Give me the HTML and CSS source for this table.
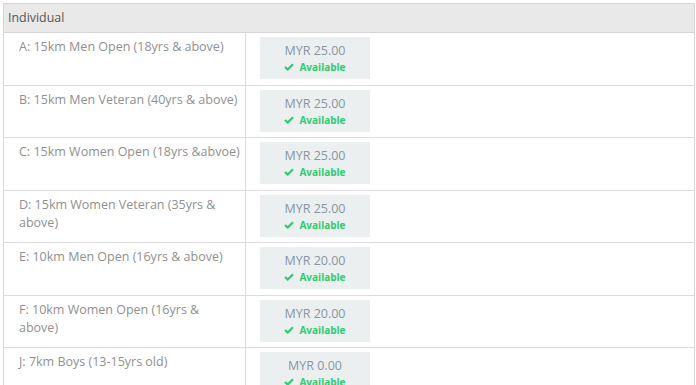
FILE: index.html
```html
<!DOCTYPE html>
<html>
<head>
<meta charset="utf-8">
<link rel="stylesheet" href="styles.css">
</head>
<body>
<div class="panel">
  <div class="panel-head">Individual</div>
  <table class="cats">
    <tbody>
      <tr><td class="name">A: 15km Men Open (18yrs &amp; above)</td><td class="price"><div class="pbox"><div class="amt">MYR 25.00</div><div class="avail"><svg viewBox="0 0 12 10" class="chk"><path d="M1 5 L4.4 8.2 L11 1.6" /></svg>Available</div></div></td></tr>
      <tr><td class="name">B: 15km Men Veteran (40yrs &amp; above)</td><td class="price"><div class="pbox"><div class="amt">MYR 25.00</div><div class="avail"><svg viewBox="0 0 12 10" class="chk"><path d="M1 5 L4.4 8.2 L11 1.6" /></svg>Available</div></div></td></tr>
      <tr><td class="name">C: 15km Women Open (18yrs &amp;abvoe)</td><td class="price"><div class="pbox"><div class="amt">MYR 25.00</div><div class="avail"><svg viewBox="0 0 12 10" class="chk"><path d="M1 5 L4.4 8.2 L11 1.6" /></svg>Available</div></div></td></tr>
      <tr><td class="name">D: 15km Women Veteran (35yrs &amp; above)</td><td class="price"><div class="pbox"><div class="amt">MYR 25.00</div><div class="avail"><svg viewBox="0 0 12 10" class="chk"><path d="M1 5 L4.4 8.2 L11 1.6" /></svg>Available</div></div></td></tr>
      <tr><td class="name">E: 10km Men Open (16yrs &amp; above)</td><td class="price"><div class="pbox"><div class="amt">MYR 20.00</div><div class="avail"><svg viewBox="0 0 12 10" class="chk"><path d="M1 5 L4.4 8.2 L11 1.6" /></svg>Available</div></div></td></tr>
      <tr><td class="name">F: 10km Women Open (16yrs &amp; above)</td><td class="price"><div class="pbox"><div class="amt">MYR 20.00</div><div class="avail"><svg viewBox="0 0 12 10" class="chk"><path d="M1 5 L4.4 8.2 L11 1.6" /></svg>Available</div></div></td></tr>
      <tr><td class="name">J: 7km Boys (13-15yrs old)</td><td class="price"><div class="pbox"><div class="amt">MYR 0.00</div><div class="avail"><svg viewBox="0 0 12 10" class="chk"><path d="M1 5 L4.4 8.2 L11 1.6" /></svg>Available</div></div></td></tr>
    </tbody>
  </table>
</div>
</body>
</html>
```

FILE: styles.css
```css
html, body {
  margin: 0;
  padding: 0;
  background: #ffffff;
}
body {
  padding: 3px 1px 0 3px;
  font-family: "Open Sans", "Noto Sans", sans-serif;
  overflow: hidden;
}
.panel {
  border: 1px solid #d6d6d6;
  border-bottom: none;
  width: 690px;
}
.panel-head {
  background: #e9e9e9;
  color: #555555;
  font-size: 12.4px;
  line-height: 28px;
  height: 28px;
  padding-left: 4px;
  border-bottom: 1px solid #d6d6d6;
}
.cats {
  width: 100%;
  border-collapse: collapse;
  table-layout: fixed;
}
.cats td {
  border-bottom: 1px solid #dcdcdc;
  vertical-align: top;
  padding: 4px 0 5.5px 0;
}
.cats td.name {
  width: 221px;
  padding: 5px 5px 5px 15px;
  border-right: 1px solid #dcdcdc;
  color: #8f8f8f;
  font-size: 12.5px;
  line-height: 18px;
}
.cats td.price {
  padding-left: 14px;
}
.pbox {
  width: 110px;
  height: 42px;
  background: #ecefef;
  text-align: center;
  box-sizing: border-box;
  padding-top: 5px;
}
.amt {
  color: #8796a3;
  font-size: 12.5px;
  line-height: 18px;
}
.avail {
  color: #2ecc71;
  font-size: 10px;
  font-weight: 700;
  line-height: 14px;
  display: flex;
  justify-content: center;
  align-items: center;
  gap: 5px;
}
.chk {
  width: 10px;
  height: 8px;
  fill: none;
  stroke: #2ecc71;
  stroke-width: 2.8;
  stroke-linecap: butt;
}
```
